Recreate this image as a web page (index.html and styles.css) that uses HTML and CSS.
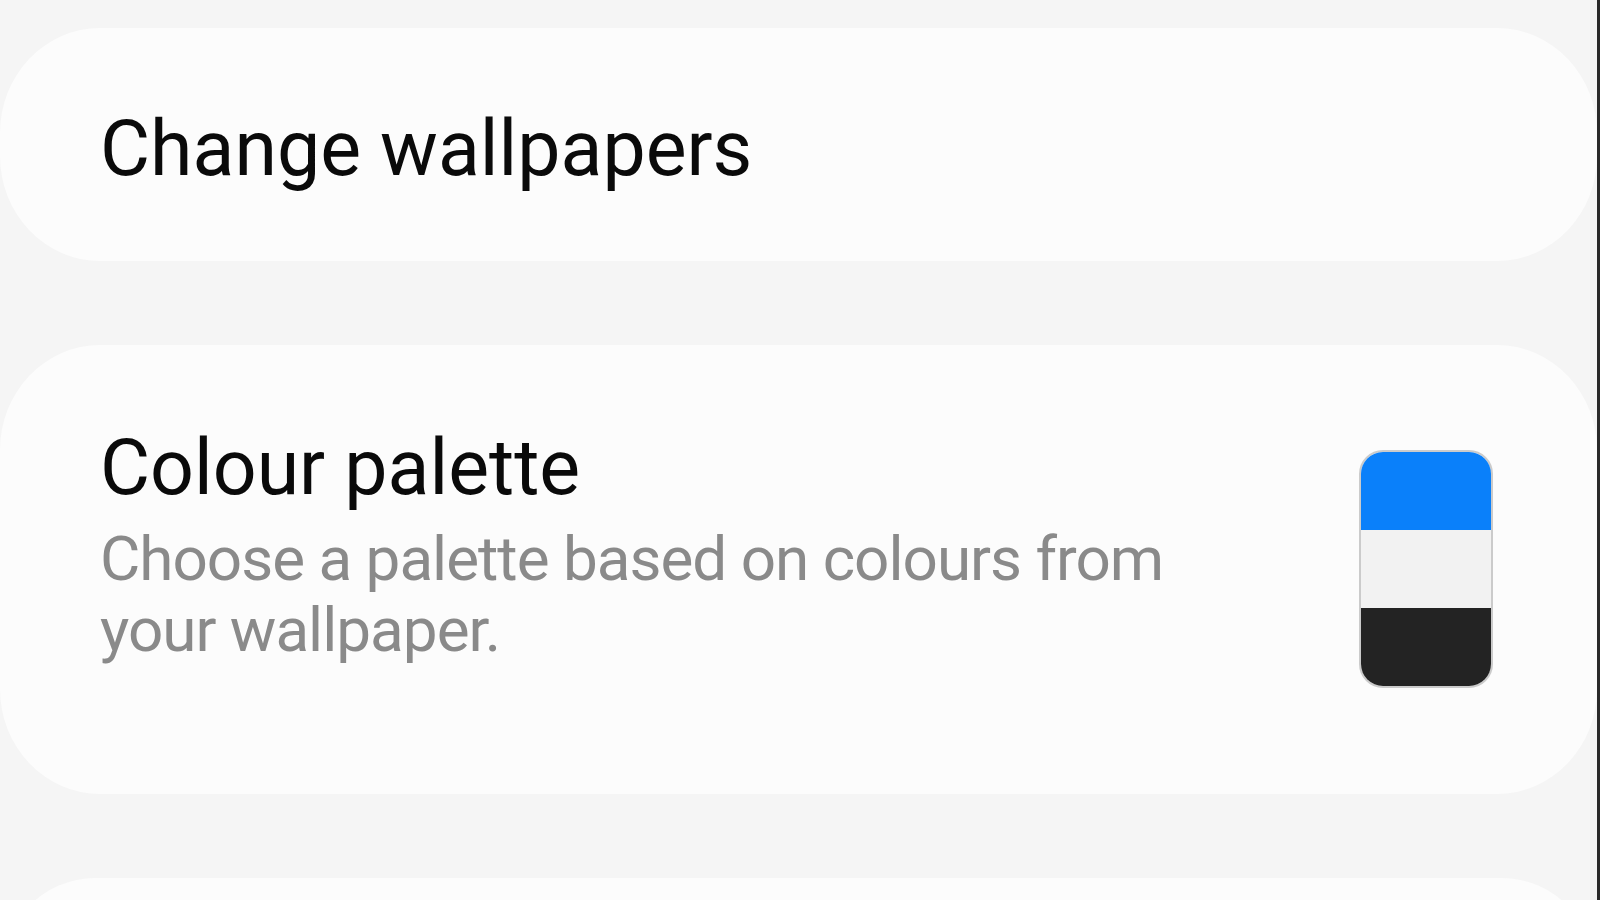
FILE: index.html
```html
<!DOCTYPE html>
<html lang="en">
<head>
    <meta charset="UTF-8">
    <meta name="viewport" content="width=device-width, initial-scale=1.0">
    <title>Wallpaper and style</title>
    <link rel="stylesheet" href="styles.css">
</head>
<body>
    <main class="settings">
        <!--Wallpaper card-->
        <div class="card card-single">
            <div class="card-text">
                <div class="card-title">Change wallpapers</div>
            </div>
        </div>

        <!--Palette card with swatch on the right-->
        <div class="card card-palette">
            <div class="card-text">
                <div class="card-title">Colour palette</div>
                <div class="card-sub">Choose a palette based on colours from your wallpaper.</div>
            </div>
            <div class="swatch">
                <div class="swatch-blue"></div>
                <div class="swatch-light"></div>
                <div class="swatch-dark"></div>
            </div>
        </div>

        <!--next card, cut off by the screen-->
        <div class="card card-next"></div>
    </main>
</body>
</html>
```

FILE: styles.css
```css
/*page background like One UI settings*/
body {
    margin: 0;
    background-color: #f5f5f5;
    font-family: Roboto, "Liberation Sans", Arial, sans-serif;
}
.settings {
    display: flex;
    flex-direction: column;
    gap: 84px;
    padding-top: 28px;
    width: 1600px;
    height: 900px;
    border-right: 3px solid #2a2a2a;
    box-sizing: border-box;
    overflow: hidden;
}
.card {
    background-color: #fcfcfc;
    border-radius: 100px / 105px;
    display: flex;
    flex-shrink: 0;
    padding-left: 100px;
    box-sizing: border-box;
}
.card-single {
    height: 233px;
    padding-top: 73px;
}
.card-palette {
    height: 449px;
    padding-top: 75px;
    padding-right: 104px;
    justify-content: space-between;
    align-items: flex-start;
}
.card-next {
    height: 200px;
}
.card-title {
    font-size: 77px;
    line-height: 96px;
    color: #0a0a0a;
}
.card-sub {
    margin-top: 7px;
    font-size: 62px;
    line-height: 71px;
    letter-spacing: -1px;
    color: #8a8a8a;
    width: 1180px;
}
/*three colour swatch*/
.swatch {
    margin-top: 30px;
    width: 134px;
    height: 238px;
    border: 2px solid #cbcbcb;
    border-radius: 24px;
    overflow: hidden;
    display: flex;
    flex-direction: column;
    box-sizing: border-box;
}
.swatch-blue {
    flex: 1;
    background-color: #0a80fa;
}
.swatch-light {
    flex: 1;
    background-color: #f2f2f2;
}
.swatch-dark {
    flex: 1;
    background-color: #232323;
}
```
